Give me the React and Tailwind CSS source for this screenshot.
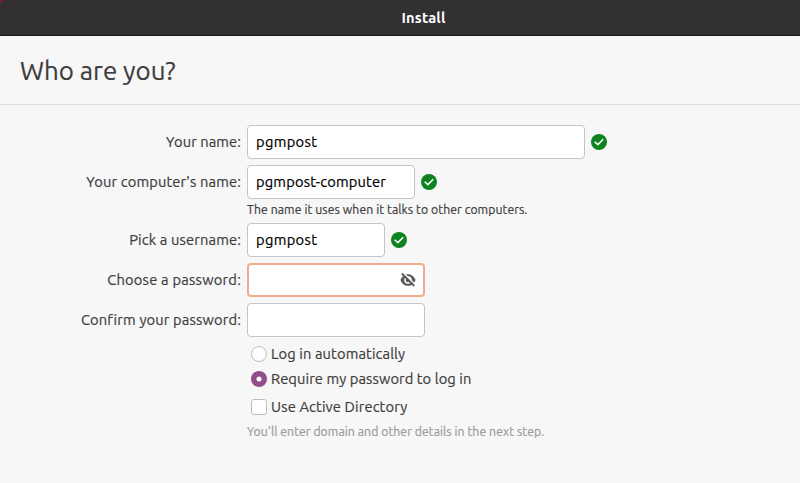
import React from "react";

function Row({ label, labelClass = "", children }) {
  return (
    <div className="flex h-[34px] items-center">
      <div className="flex w-[241px] shrink-0 justify-end">
        <label className={`whitespace-nowrap ${labelClass}`}>{label}</label>
      </div>
      <div className="ml-[6px] flex items-center gap-[6px]">{children}</div>
    </div>
  );
}

function Field({ className = "", children }) {
  return (
    <div className={`flex h-[34px] items-center rounded-[4px] bg-white text-black ${className}`}>
      {children}
    </div>
  );
}

function Valid() {
  return (
    <svg className="size-4" viewBox="0 0 16 16" fill="none">
      <circle cx="8" cy="8" r="8" fill="#0e8420" />
      <path d="M3.7 7.7 6.9 10.6 12.2 5.2" stroke="#fff" strokeWidth="1.5" />
    </svg>
  );
}

function EyeOff() {
  return (
    <svg className="size-4" viewBox="0 0 16 16" fill="none">
      <path
        fillRule="evenodd"
        fill="#5a5a5a"
        d="M8 2.2C4.6 2.2 1.7 4.4.5 8c1.2 3.6 4.1 5.8 7.5 5.8s6.3-2.2 7.5-5.8C14.3 4.4 11.4 2.2 8 2.2ZM8 4.2a3.8 3.8 0 1 1 0 7.6 3.8 3.8 0 0 1 0-7.6Z"
      />
      <circle cx="8" cy="8" r="2.3" fill="#5a5a5a" />
      <path d="M3.3.7 15.3 12.7" stroke="#fff" strokeWidth="1.6" />
      <path d="M1.8 1.5 14.3 14" stroke="#5a5a5a" strokeWidth="1.8" />
    </svg>
  );
}

export default function App() {
  return (
    <div className="h-[483px] w-[800px] overflow-hidden bg-[#f7f7f7] font-['Ubuntu','Noto_Sans',sans-serif] text-[14.667px] leading-5 text-[#3d3d3d] [-webkit-text-stroke:0.2px]">
      <div className="bg-[#8e1a1c]">
        <header className="flex h-9 items-center justify-center rounded-tl-[5px] border-b border-[#1d1c1c] bg-[#333031] pl-[47px]">
          <span className="pt-px font-bold tracking-[0.2px] text-white [-webkit-text-stroke:0px]">Install</span>
        </header>
      </div>
      <div className="flex h-[69px] items-center border-b border-[#dcdcdc] pl-5 pt-px">
        <h1 className="text-[25.9px] leading-8">Who are you?</h1>
      </div>
      <main className="flex flex-col pt-5">
        <Row label="Your name:" labelClass="tracking-[0.1px]">
          <Field className="w-[338px] border border-[#c4c4c4] pl-[8px] tracking-[0.33px]">pgmpost</Field>
          <Valid />
        </Row>
        <div className="h-[6px]" />
        <Row label="Your computer's name:" labelClass="tracking-[0.15px]">
          <Field className="w-[168px] border border-[#c4c4c4] pl-[8px] tracking-[0.18px]">pgmpost-computer</Field>
          <Valid />
        </Row>
        <p className="ml-[247px] flex h-6 items-center text-[12.22px] tracking-[0.085px]">
          <span className="-mt-[3px]">The name it uses when it talks to other computers.</span>
        </p>
        <Row label="Pick a username:" labelClass="tracking-[0.15px]">
          <Field className="w-[138px] border border-[#c4c4c4] pl-[8px] tracking-[0.33px]">pgmpost</Field>
          <Valid />
        </Row>
        <div className="h-[6px]" />
        <Row label="Choose a password:" labelClass="tracking-[0.23px]">
          <Field className="w-[178px] justify-end border-2 border-[#f4aa90] pr-[7px]">
            <EyeOff />
          </Field>
        </Row>
        <div className="h-[6px]" />
        <Row label="Confirm your password:" labelClass="tracking-[0.16px]">
          <Field className="w-[178px] border border-[#c4c4c4]" />
        </Row>
        <div className="ml-[251px] mt-[7px] flex h-5 items-center gap-1">
          <span className="size-4 rounded-full border border-[#bdbdbd] bg-white" />
          <span className="tracking-[0.12px]">Log in automatically</span>
        </div>
        <div className="ml-[251px] mt-[5px] flex h-5 items-center gap-1">
          <span className="flex size-4 items-center justify-center rounded-full bg-[#924d8b]">
            <svg className="size-4" viewBox="0 0 16 16">
              <circle cx="8" cy="8" r="2.5" fill="#fff" />
            </svg>
          </span>
          <span className="tracking-[0.09px]">Require my password to log in</span>
        </div>
        <div className="ml-[251px] mt-2 flex h-5 items-center gap-1">
          <span className="size-4 rounded-[3px] border border-[#bdbdbd] bg-white" />
          <span className="tracking-[0.14px]">Use Active Directory</span>
        </div>
        <p className="ml-[247px] mt-[5px] flex h-5 items-center text-[12.22px] tracking-[0.07px] text-[#9a9a9a]">
          <span>You'll enter domain and other details in the next step.</span>
        </p>
      </main>
    </div>
  );
}
